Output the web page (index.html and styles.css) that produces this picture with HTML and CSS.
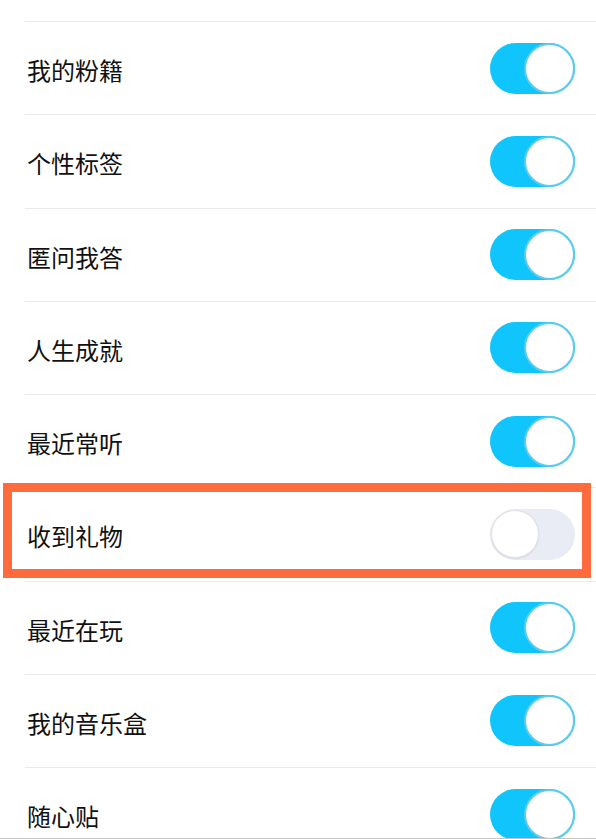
FILE: index.html
```html
<!DOCTYPE html>
<html lang="zh-CN">

<head>
    <meta charset="UTF-8">
    <meta name="viewport" content="width=device-width, initial-scale=1.0">
    <title>资料展示设置</title>
    <link rel="stylesheet" href="styles.css">
</head>

<body>
    <div class="screen">
        <ul class="setting-list">
            <li class="setting-row cut"></li>
            <li class="setting-row">
                <span class="setting-name">我的粉籍</span>
                <span class="switch on"><span class="knob"></span></span>
            </li>
            <li class="setting-row">
                <span class="setting-name">个性标签</span>
                <span class="switch on"><span class="knob"></span></span>
            </li>
            <li class="setting-row">
                <span class="setting-name">匿问我答</span>
                <span class="switch on"><span class="knob"></span></span>
            </li>
            <li class="setting-row">
                <span class="setting-name">人生成就</span>
                <span class="switch on"><span class="knob"></span></span>
            </li>
            <li class="setting-row">
                <span class="setting-name">最近常听</span>
                <span class="switch on"><span class="knob"></span></span>
            </li>
            <li class="setting-row marked">
                <span class="setting-name">收到礼物</span>
                <span class="switch off"><span class="knob"></span></span>
                <span class="mark-box"></span>
            </li>
            <li class="setting-row">
                <span class="setting-name">最近在玩</span>
                <span class="switch on"><span class="knob"></span></span>
            </li>
            <li class="setting-row">
                <span class="setting-name">我的音乐盒</span>
                <span class="switch on"><span class="knob"></span></span>
            </li>
            <li class="setting-row">
                <span class="setting-name">随心贴</span>
                <span class="switch on"><span class="knob"></span></span>
            </li>
        </ul>
    </div>
</body>

</html>
```

FILE: styles.css
```css
html,
body {
    margin: 0;
    padding: 0;
    background: #ffffff;
}

.screen {
    height: 839px;
    overflow: hidden;
    box-sizing: border-box;
    border-bottom: 1px solid #c4c4c4;
    font-family: "Noto Sans CJK SC", sans-serif;
}

.setting-list {
    list-style: none;
    margin: 0;
    padding: 0 0 0 25px;
}

.setting-row {
    position: relative;
    display: flex;
    align-items: center;
    justify-content: space-between;
    height: 93.25px;
    box-sizing: border-box;
    padding-right: 21px;
    border-bottom: 1px solid #e9ecef;
}

/* the row above, scrolled out of view */
.setting-row.cut {
    height: 22px;
}

.setting-name {
    font-size: 24px;
    color: #111111;
    padding-top: 3px;
    padding-left: 2px;
}

/* toggle */
.switch {
    display: flex;
    align-items: center;
    width: 85px;
    height: 51px;
    border-radius: 26px;
    box-sizing: border-box;
}

.switch.on {
    background: #10c5fb;
    justify-content: flex-end;
}

.switch.off {
    background: #e9ebf5;
    justify-content: flex-start;
    padding-left: 1px;
}

.knob {
    width: 51px;
    height: 51px;
    border-radius: 50%;
    background: #ffffff;
    box-sizing: border-box;
}

.switch.on .knob {
    border: 2px solid #5ccbef;
}

.switch.off .knob {
    width: 48px;
    height: 48px;
    border: 1px solid #dfe0e9;
    box-shadow: 0 1px 2px rgba(0, 0, 0, 0.08);
}

/* red frame over one row */
.mark-box {
    position: absolute;
    top: -5px;
    left: -22px;
    right: 5px;
    height: 95px;
    border: 9px solid #ff6b3d;
    box-sizing: border-box;
}
```
